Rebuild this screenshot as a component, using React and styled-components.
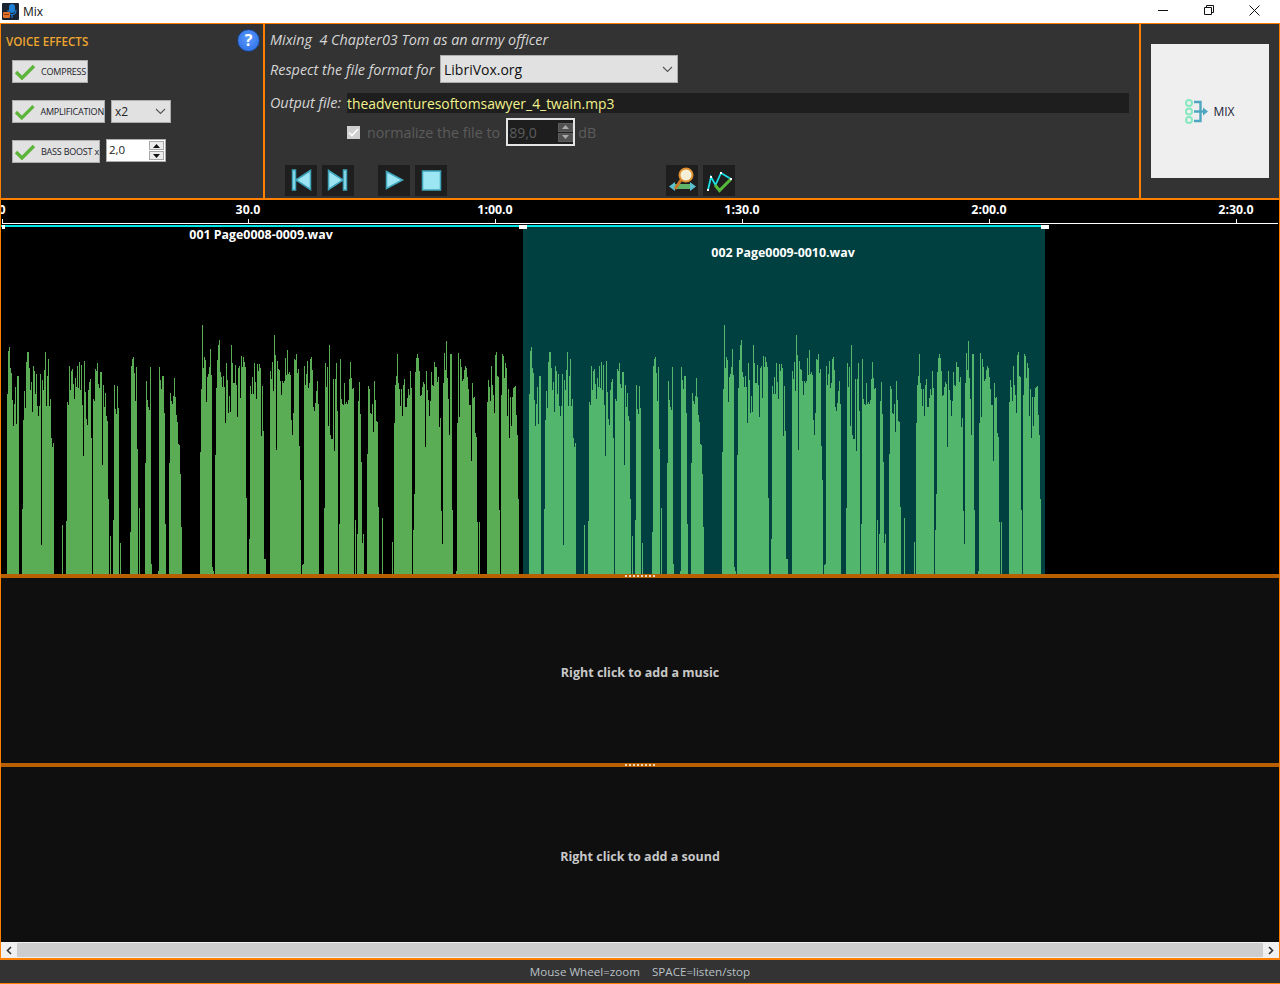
import React, { useMemo } from "react";
import styled, { createGlobalStyle } from "styled-components";

const UI_FONT = `"Open Sans", "Noto Sans", "Liberation Sans", sans-serif`;
const ORANGE = "#ff8000";
const DARK_ORANGE = "#b85f00";

const WAVE = [
  [7, [222, 93, 82, 143, 158, 240, 318, 252, 202, 312, 168, 168]],
  [22, [567, 300, 213, 264, 125, 96, 96, 144, 210, 186, 276, 138, 153, 222, 163, 258, 288, 258, 162, 675, 180, 210, 150, 96, 258, 168, 117, 258, 237, 354, 380, 369]],
  [62, [615]],
  [66, [603, 246, 255, 138, 210, 153, 147, 192, 237, 174, 201, 138, 204, 126, 210, 135, 255, 408, 123, 216, 297, 315, 210, 186, 178, 354]],
  [93, [237, 243, 147, 153, 129, 192, 204, 156, 156, 435, 195, 261, 219, 288, 303, 537]],
  [110, [648]],
  [113, [600, 195, 267, 282, 198, 264]],
  [120, [669]],
  [130, [636, 138, 117, 111, 159, 243, 141, 387]],
  [139, [564]],
  [145, [429, 183, 240, 261, 270, 141, 732]],
  [158, [753, 141, 180, 207, 168, 168, 279, 612]],
  [169, [429, 219, 243, 252, 228, 175, 231, 285, 306, 372, 375, 462, 621]],
  [200, [396, 207, 15, 144, 111, 120, 246, 170, 162, 140, 87, 165, 741, 753]],
  [215, [405, 203, 120, 75, 60, 155, 170, 200, 168, 200, 308, 129, 180, 280, 228, 275, 75, 130, 190, 190, 135, 195, 290, 143, 138, 235, 108, 140, 112, 125, 140, 535]],
  [249, [657, 198, 222, 172, 222, 130, 185, 237, 132, 153, 132, 145, 347, 198, 333, 717, 717]],
  [270, [153, 177, 126, 213, 45, 105, 390, 123, 147, 150, 183, 225, 183, 190, 183, 114, 165, 90, 163, 156, 165, 300, 345, 279, 117, 120, 102, 159, 147, 378, 480]],
  [302, [735, 732, 138, 195, 162, 123, 205, 190, 117, 111, 150, 262, 273, 250, 213, 183, 252]],
  [324, [564, 129, 201, 141, 318, 75, 345, 357, 357, 178, 393, 178, 129, 273]],
  [339, [612, 117, 237, 252, 255, 190, 252, 246, 252, 240, 177, 126, 174, 207, 204]],
  [355, [600]],
  [357, [642, 243, 186, 282, 426, 669, 642]],
  [367, [402, 198, 207, 279, 282, 252, 335, 183, 240, 303, 306, 561]],
  [382, [594]],
  [392, [666]],
  [394, [309, 195, 168, 102, 190, 207, 258, 207, 288, 195, 178, 262, 262, 235, 207, 225, 153, 205]],
  [413, [630, 522, 155, 114, 102, 114, 153, 228, 225, 202, 186, 192, 381, 153, 210, 240, 288, 243, 156, 195, 198, 126, 140, 141, 185, 170, 320, 295, 573, 672, 190, 100, 150, 63, 175, 237, 345, 102, 102, 570]],
  [456, [753, 309, 99, 290, 117, 140, 182, 178, 150, 138, 145, 170, 207, 255, 255, 423, 190, 235, 232, 340, 351, 605]],
  [479, [606]],
  [487, [246, 180, 202, 243, 138, 195, 225, 280, 105, 97, 168, 170, 570]],
  [501, [225, 102, 108, 175, 129, 145, 288, 207, 353, 230, 318, 231, 204, 202, 198, 285, 345, 537]],
];

const TICKS = [
  { x: 1, label: "0" },
  { x: 247, label: "30.0" },
  { x: 494, label: "1:00.0" },
  { x: 741, label: "1:30.0" },
  { x: 988, label: "2:00.0" },
  { x: 1235, label: "2:30.0" },
];

const GlobalStyle = createGlobalStyle`
  html, body {
    margin: 0;
    padding: 0;
    background: #333;
  }
  * {
    box-sizing: border-box;
  }
`;

const Window = styled.div`
  width: 1280px;
  height: 984px;
  display: flex;
  flex-direction: column;
  overflow: hidden;
  font-family: ${UI_FONT};
`;

const TitleBar = styled.div`
  height: 23px;
  flex: none;
  display: flex;
  align-items: center;
  background: #fff;
  padding: 0 3px 0 2px;
`;

const WindowTitle = styled.span`
  margin-left: 4px;
  font-size: 12px;
  color: #111;
`;

const WindowButtons = styled.div`
  margin-left: auto;
  display: flex;
`;

const WindowButton = styled.div`
  width: 45.5px;
  height: 23px;
  display: flex;
  align-items: center;
  justify-content: center;
  padding-bottom: 3px;
`;

const TopPanels = styled.div`
  height: 177px;
  flex: none;
  display: grid;
  grid-template-columns: 262px 874px 1fr;
  column-gap: 2px;
  background: ${ORANGE};
  padding: 1px 1px 2px 1px;
`;

const EffectsPanel = styled.div`
  position: relative;
  background: #333;
  padding: 10px 0 0 5px;
`;

const EffectsTitle = styled.div`
  font-size: 11.6px;
  line-height: 16px;
  font-weight: 600;
  color: #eea52f;
`;

const HelpBadge = styled.div`
  position: absolute;
  top: 5px;
  right: 3px;
  width: 23px;
  height: 23px;
  border-radius: 50%;
  background: radial-gradient(circle at 50% 40%, #5c9cff, #2467e0);
  border: 1px solid #1c3f78;
  color: #fff;
  font-size: 16px;
  font-weight: 700;
  line-height: 20px;
  text-align: center;
`;

const EffectRow = styled.div`
  display: flex;
  align-items: flex-start;
  margin: ${(p) => p.$top}px 0 0 6px;
`;

const EffectButton = styled.div`
  width: ${(p) => p.$width}px;
  height: 23px;
  display: flex;
  align-items: center;
  background: #e1e1e1;
  border: 1px solid #adadad;
  padding-left: 1px;
  font-size: 9px;
  color: #1b1b2a;
  white-space: nowrap;
  overflow: hidden;
  letter-spacing: -0.2px;
`;

const EffectLabel = styled.span`
  margin-left: 5px;
`;

const SmallCombo = styled.div`
  width: 60px;
  height: 23px;
  margin-left: 6px;
  display: flex;
  align-items: center;
  justify-content: space-between;
  background: #e1e1e1;
  border: 1px solid #adadad;
  padding: 0 4px 0 3px;
  font-size: 12px;
  color: #222;
`;

const SmallSpin = styled.div`
  width: 60px;
  height: 23px;
  margin: -1px 0 0 6px;
  display: flex;
  align-items: center;
  justify-content: space-between;
  background: #fff;
  border: 1px solid #adadad;
  padding: 0 1px 0 2px;
  font-size: 11.5px;
  color: #222;
`;

const SpinValue = styled.span`
  padding-bottom: 2px;
`;

const SpinButtons = styled.div`
  display: flex;
  flex-direction: column;
  gap: 1px;
`;

const SpinButton = styled.div`
  width: 15px;
  height: 9px;
  display: flex;
  align-items: center;
  justify-content: center;
  background: ${(p) => (p.$muted ? "#505050" : "#ececec")};
  border: 1px solid ${(p) => (p.$muted ? "#5c5c5c" : "#a8a8a8")};
`;

const MainPanel = styled.div`
  background: #333;
  padding: 6px 10px 0 5px;
  display: flex;
  flex-direction: column;
`;

const Caption = styled.div`
  font-size: 14.4px;
  line-height: 20px;
  font-style: italic;
  color: #d6d6d6;
  white-space: pre;
`;

const FormRow = styled.div`
  display: flex;
  align-items: center;
  margin-top: ${(p) => p.$top}px;
`;

const FormatLabel = styled(Caption)`
  width: 165px;
  flex: none;
  padding-top: 1px;
`;

const FormatCombo = styled.div`
  width: 238px;
  height: 28px;
  margin-left: 5px;
  display: flex;
  align-items: center;
  justify-content: space-between;
  background: #e1e1e1;
  border: 1px solid #adadad;
  padding: 0 4px 0 3px;
  font-size: 14px;
  color: #111;
`;

const OutputLabel = styled(Caption)`
  width: 77px;
  flex: none;
`;

const OutputField = styled.div`
  flex: 1;
  height: 20px;
  background: #1e1e1e;
  font-size: 13.9px;
  line-height: 21px;
  color: #f2f28c;
`;

const NormalizeRow = styled(FormRow)`
  padding-left: 77px;
  color: #5c5c5c;
  font-size: 14.3px;
`;

const MutedCheck = styled.div`
  width: 13px;
  height: 13px;
  background: #cfcfcf;
  display: flex;
  align-items: center;
  justify-content: center;
  margin-right: 7px;
`;

const DbSpin = styled.div`
  width: 69px;
  height: 28px;
  margin: 0 3px 0 6px;
  display: flex;
  align-items: center;
  justify-content: space-between;
  background: #1e1e1e;
  border: 2px solid #e4e4e4;
  padding-left: 1px;
  font-size: 14px;
  color: #5c5c5c;
`;

const ToolRow = styled.div`
  display: flex;
  margin: 19px 0 0 15px;
`;

const ToolGroup = styled.div`
  display: flex;
  gap: 5px;
  margin-right: ${(p) => p.$after || 0}px;
`;

const ToolButton = styled.div`
  width: 32px;
  height: 31px;
  background: #1e1e1e;

  svg {
    display: block;
  }
`;

const MixPanel = styled.div`
  background: #333;
  padding: 20px 10px 0 10px;
`;

const MixButton = styled.div`
  width: 118px;
  height: 134px;
  display: flex;
  align-items: center;
  justify-content: center;
  gap: 5px;
  background: #efefef;
  font-size: 12px;
  color: #1c1c38;
`;

const Workspace = styled.div`
  flex: 1;
  display: flex;
  flex-direction: column;
  min-height: 0;
  border-left: 1px solid ${ORANGE};
  border-right: 1px solid ${ORANGE};
`;

const Ruler = styled.div`
  position: relative;
  height: 24px;
  flex: none;
  background: #000;
  overflow: hidden;
`;

const RulerLine = styled.div`
  position: absolute;
  left: 1px;
  right: 1px;
  bottom: 0;
  height: 1px;
  background: #fff;
`;

const RulerTick = styled.div`
  position: absolute;
  bottom: 0;
  width: 1px;
  height: 5px;
  background: #fff;
`;

const RulerLabel = styled.div`
  position: absolute;
  top: 1px;
  transform: translateX(-50%);
  font-size: 12.4px;
  line-height: 17px;
  font-weight: 700;
  color: #fff;
`;

const VoiceTrack = styled.div`
  height: 350px;
  flex: none;
  display: flex;
  align-items: flex-end;
  background: #000;
`;

const Clip = styled.div`
  position: relative;
  width: 522px;
  height: 349px;
  flex: none;
  display: flex;
  flex-direction: column;
  align-items: center;
  background: ${(p) => p.$bg};
  border-top: 2px solid #00e6e6;
`;

const ClipName = styled.div`
  margin: ${(p) => p.$top}px 2px 0 0;
  font-size: 12.4px;
  line-height: 16px;
  font-weight: 700;
  color: #fff;
`;

const ClipHandle = styled.div`
  position: absolute;
  top: -2px;
  left: ${(p) => p.$left}px;
  width: ${(p) => p.$width}px;
  height: 4px;
  background: #fff;
`;

const WaveSvg = styled.svg`
  display: block;
  margin-top: auto;
  shape-rendering: crispEdges;
`;

const Splitter = styled.div`
  height: 4px;
  flex: none;
  display: flex;
  align-items: center;
  justify-content: center;
  background: ${DARK_ORANGE};
`;

const Grip = styled.div`
  width: 30px;
  height: 2px;
  background: repeating-linear-gradient(90deg, #f0d8b8 0 2px, transparent 2px 4px);
`;

const EmptyLane = styled.div`
  height: ${(p) => p.$height}px;
  flex: none;
  display: flex;
  align-items: center;
  justify-content: center;
  padding-top: 4px;
  background: #0f0f0f;
  font-size: 12.5px;
  font-weight: 700;
  color: #c8c8c8;
`;

const ScrollBar = styled.div`
  height: 16px;
  flex: none;
  display: flex;
  align-items: stretch;
  background: #f0f0f0;
`;

const ScrollArrow = styled.div`
  width: 16px;
  display: flex;
  align-items: center;
  justify-content: center;
`;

const ScrollThumb = styled.div`
  flex: 1;
  margin: 1px 0;
  background: #cdcdcd;
`;

const StatusBar = styled.div`
  height: 26px;
  flex: none;
  display: flex;
  align-items: center;
  justify-content: center;
  background: #333;
  border-top: 2px solid ${ORANGE};
  border-bottom: 1px solid ${ORANGE};
  font-size: 11.6px;
  color: #b9c0c6;
  white-space: pre;
`;

const Check = () => (
  <svg width="22" height="17" viewBox="0 0 22 17">
    <path d="M2 9l6 6L20 3" fill="none" stroke="#5cb53a" strokeWidth="3.4" strokeLinejoin="miter" />
  </svg>
);

const Chevron = ({ color = "#555" }) => (
  <svg width="11" height="7" viewBox="0 0 11 7">
    <path d="M1 1l4.5 4.5L10 1" fill="none" stroke={color} strokeWidth="1.1" />
  </svg>
);

const Triangle = ({ down, color }) => (
  <svg width="7" height="4" viewBox="0 0 7 4">
    <path d={down ? "M0 0h7L3.5 4z" : "M0 4h7L3.5 0z"} fill={color} />
  </svg>
);

const AppIcon = () => (
  <svg width="17" height="17" viewBox="0 0 17 17">
    <rect width="17" height="17" rx="1" fill="#1a2430" />
    <rect x="7" y="1" width="6" height="9" rx="3" fill="#1d7fd6" />
    <path d="M6 7c0 6 8 6 8 0M10 12v3" fill="none" stroke="#1d7fd6" strokeWidth="1.2" />
    <rect x="1" y="9" width="7" height="6" rx="1" fill="#e0702a" />
    <rect x="2" y="11" width="5" height="1" fill="#8a3c10" />
  </svg>
);

const TRANSPORT = {
  first: "M7.5 5h3v20h-3zM11 15L25.5 5.5v19z",
  last: "M21.5 5h3v20h-3zM21 15L6.5 5.5v19z",
  play: "M8.5 6.5l16 8.5-16 8.5z",
  stop: "M7.5 6h18v19h-18z",
};

const TransportIcon = ({ kind }) => (
  <svg width="32" height="31" viewBox="0 0 32 31" fill="#9ce5f2" stroke="#3fa5bb" strokeWidth="1.5">
    <path d={TRANSPORT[kind]} />
  </svg>
);

const ZoomIcon = () => (
  <svg width="32" height="31" viewBox="0 0 32 31">
    <rect x="8" y="19" width="17" height="5" fill="#5fb56a" />
    <path d="M3 21.5l6-4.5v9zM30 21.5l-6-4.5v9z" fill="#5ac0d0" />
    <path d="M15 15l-6 9" stroke="#c77a2a" strokeWidth="3" />
    <circle cx="20" cy="10" r="6.5" fill="#f6efd8" stroke="#e0912f" strokeWidth="2" />
  </svg>
);

const EnvelopeIcon = () => (
  <svg width="32" height="31" viewBox="0 0 32 31">
    <path d="M5 25L8 12l4.5 8L18 8l10 6" fill="none" stroke="#19dfe6" strokeWidth="1.8" />
    <path d="M12 20l4.5 5.5L28 14" fill="none" stroke="#54bb3a" strokeWidth="3" />
    <rect x="4" y="24" width="2" height="2" fill="#fff" />
    <rect x="7" y="11" width="2" height="2" fill="#fff" />
    <rect x="17" y="7" width="2" height="2" fill="#fff" />
    <rect x="27" y="13" width="2" height="2" fill="#fff" />
  </svg>
);

const MixIcon = () => (
  <svg width="23" height="25" viewBox="0 0 23 25">
    <g fill="none" stroke="#86e8c0" strokeWidth="2">
      <circle cx="4" cy="4" r="3" />
      <circle cx="4" cy="12.5" r="3" />
      <circle cx="4" cy="21" r="3" />
    </g>
    <path d="M9 3h6.5v19H9M9 12.5h11" fill="none" stroke="#4fa6c0" strokeWidth="2.4" />
    <path d="M18 8.5l5 4-5 4z" fill="#4fa6c0" />
  </svg>
);

const Waveform = ({ color }) => {
  const d = useMemo(() => {
    let path = "";
    WAVE.forEach(([start, tops]) => {
      tops.forEach((top, i) => {
        const y = Math.round(250 - (762 - top) / 3);
        path += `M${start - 1 + i} ${y}h1V250h-1z`;
      });
    });
    return path;
  }, []);
  return (
    <WaveSvg width="522" height="250" viewBox="0 0 522 250">
      <path d={d} fill={color} />
    </WaveSvg>
  );
};

export default function App() {
  return (
    <Window>
      <GlobalStyle />
      <TitleBar>
        <AppIcon />
        <WindowTitle>Mix</WindowTitle>
        <WindowButtons>
          <WindowButton>
            <svg width="10" height="10" viewBox="0 0 10 10">
              <path d="M0 5.5h10" stroke="#111" />
            </svg>
          </WindowButton>
          <WindowButton>
            <svg width="10" height="10" viewBox="0 0 10 10" fill="none" stroke="#111">
              <path d="M.5 2.5h7v7h-7zM2.5 2.5v-2h7v7h-2" />
            </svg>
          </WindowButton>
          <WindowButton>
            <svg width="11" height="11" viewBox="0 0 11 11" stroke="#111">
              <path d="M.5.5l10 10M10.5.5l-10 10" />
            </svg>
          </WindowButton>
        </WindowButtons>
      </TitleBar>

      <TopPanels>
        <EffectsPanel>
          <EffectsTitle>VOICE EFFECTS</EffectsTitle>
          <HelpBadge>?</HelpBadge>
          <EffectRow $top={10}>
            <EffectButton $width={76}>
              <Check />
              <EffectLabel>COMPRESS</EffectLabel>
            </EffectButton>
          </EffectRow>
          <EffectRow $top={17}>
            <EffectButton $width={93}>
              <Check />
              <EffectLabel>AMPLIFICATION</EffectLabel>
            </EffectButton>
            <SmallCombo>
              x2
              <Chevron />
            </SmallCombo>
          </EffectRow>
          <EffectRow $top={17}>
            <EffectButton $width={88}>
              <Check />
              <EffectLabel>BASS BOOST x</EffectLabel>
            </EffectButton>
            <SmallSpin>
              <SpinValue>2,0</SpinValue>
              <SpinButtons>
                <SpinButton>
                  <Triangle color="#111" />
                </SpinButton>
                <SpinButton>
                  <Triangle down color="#111" />
                </SpinButton>
              </SpinButtons>
            </SmallSpin>
          </EffectRow>
        </EffectsPanel>

        <MainPanel>
          <Caption>Mixing  4 Chapter03 Tom as an army officer</Caption>
          <FormRow $top={5}>
            <FormatLabel>Respect the file format for</FormatLabel>
            <FormatCombo>
              LibriVox.org
              <Chevron />
            </FormatCombo>
          </FormRow>
          <FormRow $top={10}>
            <OutputLabel>Output file:</OutputLabel>
            <OutputField>theadventuresoftomsawyer_4_twain.mp3</OutputField>
          </FormRow>
          <NormalizeRow $top={5}>
            <MutedCheck>
              <svg width="11" height="9" viewBox="0 0 11 9">
                <path d="M1 4.5l3 3L10 1" fill="none" stroke="#fff" strokeWidth="1.6" />
              </svg>
            </MutedCheck>
            normalize the file to
            <DbSpin>
              89,0
              <SpinButtons>
                <SpinButton $muted>
                  <Triangle color="#aaa" />
                </SpinButton>
                <SpinButton $muted>
                  <Triangle down color="#aaa" />
                </SpinButton>
              </SpinButtons>
            </DbSpin>
            dB
          </NormalizeRow>
          <ToolRow>
            <ToolGroup $after={24}>
              <ToolButton>
                <TransportIcon kind="first" />
              </ToolButton>
              <ToolButton>
                <TransportIcon kind="last" />
              </ToolButton>
            </ToolGroup>
            <ToolGroup $after={219}>
              <ToolButton>
                <TransportIcon kind="play" />
              </ToolButton>
              <ToolButton>
                <TransportIcon kind="stop" />
              </ToolButton>
            </ToolGroup>
            <ToolGroup>
              <ToolButton>
                <ZoomIcon />
              </ToolButton>
              <ToolButton>
                <EnvelopeIcon />
              </ToolButton>
            </ToolGroup>
          </ToolRow>
        </MainPanel>

        <MixPanel>
          <MixButton>
            <MixIcon />
            MIX
          </MixButton>
        </MixPanel>
      </TopPanels>

      <Workspace>
        <Ruler>
          {TICKS.map((t) => (
            <React.Fragment key={t.label}>
              <RulerLabel style={{ left: t.x }}>{t.label}</RulerLabel>
              <RulerTick style={{ left: t.x }} />
            </React.Fragment>
          ))}
          <RulerLine />
        </Ruler>
        <VoiceTrack>
          <Clip $bg="#000">
            <ClipHandle $left={1} $width={3} />
            <ClipName $top={0}>001 Page0008-0009.wav</ClipName>
            <Waveform color="#5aad54" />
          </Clip>
          <Clip $bg="#004040">
            <ClipHandle $left={-4} $width={8} />
            <ClipHandle $left={518} $width={8} />
            <ClipName $top={18}>002 Page0009-0010.wav</ClipName>
            <Waveform color="#52b76c" />
          </Clip>
        </VoiceTrack>
        <Splitter>
          <Grip />
        </Splitter>
        <EmptyLane $height={185}>Right click to add a music</EmptyLane>
        <Splitter>
          <Grip />
        </Splitter>
        <EmptyLane $height={175}>Right click to add a sound</EmptyLane>
        <ScrollBar>
          <ScrollArrow>
            <svg width="6" height="9" viewBox="0 0 6 9">
              <path d="M5 1L1.5 4.5 5 8" fill="none" stroke="#333" strokeWidth="1.6" />
            </svg>
          </ScrollArrow>
          <ScrollThumb />
          <ScrollArrow>
            <svg width="6" height="9" viewBox="0 0 6 9">
              <path d="M1 1l3.5 3.5L1 8" fill="none" stroke="#333" strokeWidth="1.6" />
            </svg>
          </ScrollArrow>
        </ScrollBar>
      </Workspace>

      <StatusBar>Mouse Wheel=zoom    SPACE=listen/stop</StatusBar>
    </Window>
  );
}
